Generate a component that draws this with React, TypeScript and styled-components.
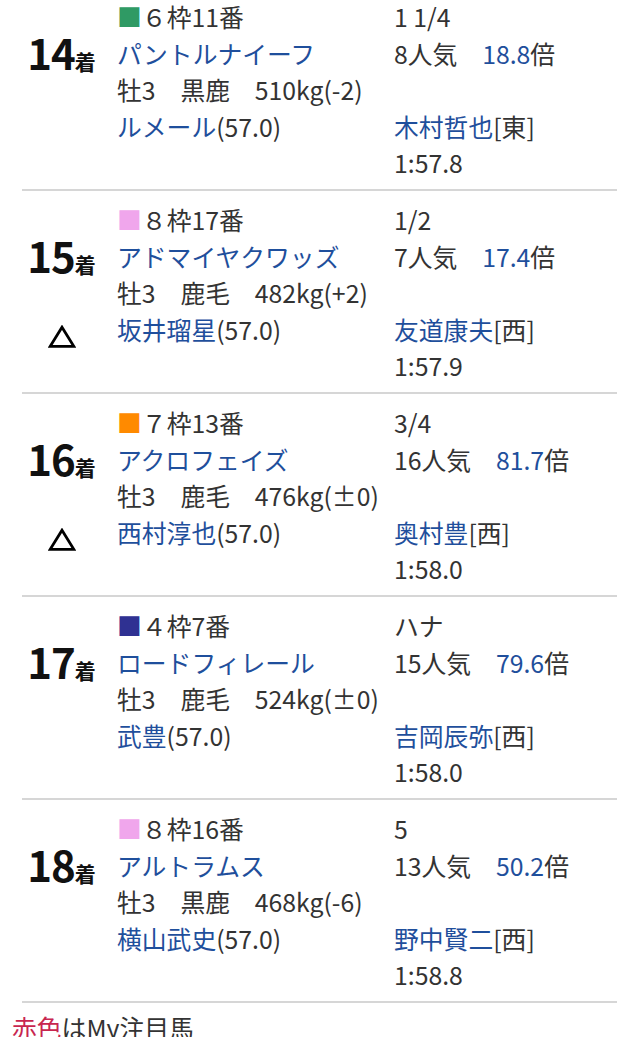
import React from 'react';
import styled, { createGlobalStyle } from 'styled-components';

const GlobalStyle = createGlobalStyle`
    html, body {
        margin: 0;
        padding: 0;
        background: #ffffff;
    }
    body {
        font-family: 'Noto Sans CJK JP', 'Noto Sans', sans-serif;
        color: #333333;
        overflow: hidden;
    }
`;

const Page = styled.main`
    width: 640px;
    height: 1037px;
    overflow: hidden;
`;

const ResultList = styled.section`
    margin: -12px 23px 0 22px;
`;

const ResultRow = styled.article`
    display: grid;
    grid-template-columns: 79px 261px 1fr;
    column-gap: 16px;
    padding: 10px 0 8.5px;
    border-bottom: 2px solid #d6d6d6;
`;

const PlaceCell = styled.div`
    display: flex;
    flex-direction: column;
    align-items: center;
    padding-top: 29px;
    color: #111111;
`;

const PlaceNumber = styled.div`
    font-size: 42px;
    font-weight: bold;
    line-height: 50px;
    letter-spacing: -1px;
`;

const PlaceSuffix = styled.span`
    font-size: 21px;
    line-height: 1;
    letter-spacing: 0;
`;

const Mark = styled.div`
    display: flex;
    margin-top: 45px;
    width: 28px;
    height: 23px;
`;

const InfoCell = styled.div`
    font-size: 24.8px;
    line-height: 36.5px;
    white-space: nowrap;
`;

const Line = styled.div`
    height: 36.5px;
`;

const Link = styled.span`
    color: #1f4f9c;
`;

const FrameSquare = styled.span<{ $color: string }>`
    color: ${(p) => p.$color};
`;

const Note = styled.p`
    margin: 6px 0 0 12px;
    font-size: 24.8px;
    line-height: 36.5px;
`;

const NoteRed = styled.span`
    color: #c8264f;
`;

// 予想印の△
const TriangleMark = () => (
    <Mark role="img" aria-label="△">
        <svg width="28" height="23" viewBox="0 0 28 23">
            <polygon points="14,2.2 25.8,21.3 2.2,21.3" fill="none" stroke="#000" strokeWidth="2.8" strokeLinejoin="miter" />
        </svg>
    </Mark>
);

interface Result {
    place: number;
    mark?: boolean;
    frame: string;
    number: number;
    color: string;
    horse: string;
    sexAge: string;
    coat: string;
    weight: string;
    jockey: string;
    load: string;
    margin: string;
    popularity: number;
    odds: string;
    trainer: string;
    stable: string;
    time: string;
}

const results: Result[] = [
    { place: 14, frame: '６', number: 11, color: '#2f9a64', horse: 'パントルナイーフ', sexAge: '牡3', coat: '黒鹿', weight: '510kg(-2)', jockey: 'ルメール', load: '57.0', margin: '1 1/4', popularity: 8, odds: '18.8', trainer: '木村哲也', stable: '東', time: '1:57.8' },
    { place: 15, mark: true, frame: '８', number: 17, color: '#f0a6ec', horse: 'アドマイヤクワッズ', sexAge: '牡3', coat: '鹿毛', weight: '482kg(+2)', jockey: '坂井瑠星', load: '57.0', margin: '1/2', popularity: 7, odds: '17.4', trainer: '友道康夫', stable: '西', time: '1:57.9' },
    { place: 16, mark: true, frame: '７', number: 13, color: '#ff8a00', horse: 'アクロフェイズ', sexAge: '牡3', coat: '鹿毛', weight: '476kg(±0)', jockey: '西村淳也', load: '57.0', margin: '3/4', popularity: 16, odds: '81.7', trainer: '奥村豊', stable: '西', time: '1:58.0' },
    { place: 17, frame: '４', number: 7, color: '#2f3192', horse: 'ロードフィレール', sexAge: '牡3', coat: '鹿毛', weight: '524kg(±0)', jockey: '武豊', load: '57.0', margin: 'ハナ', popularity: 15, odds: '79.6', trainer: '吉岡辰弥', stable: '西', time: '1:58.0' },
    { place: 18, frame: '８', number: 16, color: '#f0a6ec', horse: 'アルトラムス', sexAge: '牡3', coat: '黒鹿', weight: '468kg(-6)', jockey: '横山武史', load: '57.0', margin: '5', popularity: 13, odds: '50.2', trainer: '野中賢二', stable: '西', time: '1:58.8' },
];

const ResultItem = ({ r }: { r: Result }) => (
    <ResultRow>
        <PlaceCell>
            <PlaceNumber>
                {r.place}
                <PlaceSuffix>着</PlaceSuffix>
            </PlaceNumber>
            {r.mark && <TriangleMark />}
        </PlaceCell>
        <InfoCell>
            <Line>
                <FrameSquare $color={r.color}>■</FrameSquare>
                {r.frame}枠{r.number}番
            </Line>
            <Line>
                <Link>{r.horse}</Link>
            </Line>
            <Line>
                {r.sexAge}　{r.coat}　{r.weight}
            </Line>
            <Line>
                <Link>{r.jockey}</Link>({r.load})
            </Line>
        </InfoCell>
        <InfoCell>
            <Line>{r.margin}</Line>
            <Line>
                {r.popularity}人気　<Link>{r.odds}</Link>倍
            </Line>
            <Line />
            <Line>
                <Link>{r.trainer}</Link>[{r.stable}]
            </Line>
            <Line>{r.time}</Line>
        </InfoCell>
    </ResultRow>
);

export default function App() {
    return (
        <Page>
            <GlobalStyle />
            <ResultList>
                {results.map((r) => (
                    <ResultItem key={r.place} r={r} />
                ))}
            </ResultList>
            <Note>
                <NoteRed>赤色</NoteRed>はMy注目馬
            </Note>
        </Page>
    );
}
